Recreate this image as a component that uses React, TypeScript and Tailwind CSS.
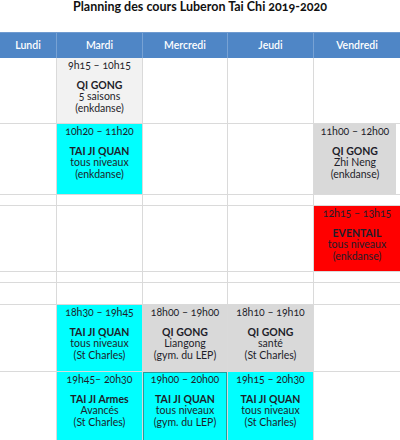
import React from 'react'

type Cell = {
    bg?: string
    time?: string
    title?: string
    lines?: string[]
    extra?: string
}

type Row = {
    h: string
    cells: Cell[]
}

const cols = 'grid grid-cols-[57px_86px_85px_86px_86px]'

const rows: Row[] = [
    {
        h: 'h-[66px]',
        cells: [
            {},
            { bg: 'bg-[#f2f2f2]', time: '9h15 – 10h15', title: 'QI GONG', lines: ['5 saisons', '(enkdanse)'] },
            {}, {}, {},
        ],
    },
    {
        h: 'h-[71px]',
        cells: [
            {},
            { bg: 'bg-[#00ffff]', time: '10h20 – 11h20', title: 'TAI JI QUAN', lines: ['tous niveaux', '(enkdanse)'] },
            {}, {},
            { bg: 'bg-[#d9d9d9]', time: '11h00 – 12h00', title: 'QI GONG', lines: ['Zhi Neng', '(enkdanse)'], extra: 'mr-[4px]' },
        ],
    },
    { h: 'h-[11px]', cells: [{}, {}, {}, {}, {}] },
    {
        h: 'h-[66px]',
        cells: [
            {}, {}, {}, {},
            { bg: 'bg-[#ff0000]', time: '12h15 – 13h15', title: 'EVENTAIL', lines: ['tous niveaux', '(enkdanse)'] },
        ],
    },
    { h: 'h-[11px]', cells: [{}, {}, {}, {}, {}] },
    { h: 'h-[22px]', cells: [{}, {}, {}, {}, {}] },
    {
        h: 'h-[67px]',
        cells: [
            {},
            { bg: 'bg-[#00ffff]', time: '18h30 – 19h45', title: 'TAI JI QUAN', lines: ['tous niveaux', '(St Charles)'] },
            { bg: 'bg-[#d9d9d9]', time: '18h00 – 19h00', title: 'QI GONG', lines: ['Liangong', '(gym. du LEP)'] },
            { bg: 'bg-[#d9d9d9]', time: '18h10 – 19h10', title: 'QI GONG', lines: ['santé', '(St Charles)'] },
            {},
        ],
    },
    {
        h: 'h-[70px]',
        cells: [
            {},
            { bg: 'bg-[#00ffff]', time: '19h45– 20h30', title: 'TAI JI Armes', lines: ['Avancés', '(St Charles)'] },
            { bg: 'bg-[#00ffff]', time: '19h00 – 20h00', title: 'TAI JI QUAN', lines: ['tous niveaux', '(gym. du LEP)'], extra: 'outline outline-1 outline-[#1f9f9f] -outline-offset-1' },
            { bg: 'bg-[#00ffff]', time: '19h15 – 20h30', title: 'TAI JI QUAN', lines: ['tous niveaux', '(St Charles)'] },
            {},
        ],
    },
]

const days = ['Lundi', 'Mardi', 'Mercredi', 'Jeudi', 'Vendredi']

function Course({ cell }: { cell: Cell }) {
    if (!cell.time) return null
    return (
        <div className={`h-full flex flex-col items-center pt-[2px] text-[10.5px] leading-[11.5px] text-[#1e1e2a] ${cell.bg} ${cell.extra ?? ''}`}>
            <span>{cell.time}</span>
            <span className="mt-[8px] font-bold">{cell.title}</span>
            {cell.lines?.map((l) => <span key={l}>{l}</span>)}
        </div>
    )
}

export default function App() {
    return (
        <div className="w-[400px] h-[440px] overflow-hidden bg-white font-['Lato','Liberation_Sans',sans-serif] [font-feature-settings:'onum']">
            <h1 className="text-center font-bold text-[12.5px] leading-[15px] text-[#111] -mt-[1px]">
                Planning des cours Luberon Tai Chi 2019-2020
            </h1>
            <div className={`${cols} mt-[18px] h-[26px] bg-[#4f86c6] border-t border-[#6f9bd0]`}>
                {days.map((d, i) => (
                    <div key={d} className={`flex items-center justify-center text-white text-[10.5px] font-semibold ${i < 4 ? 'border-r border-[#78a2d4]' : ''}`}>
                        {d}
                    </div>
                ))}
            </div>
            {rows.map((row, r) => (
                <div key={r} className={`${cols} ${row.h}`}>
                    {row.cells.map((c, i) => (
                        <div key={i} className={`border-b border-[#dadada] ${i < 4 ? 'border-r' : ''}`}>
                            <Course cell={c} />
                        </div>
                    ))}
                </div>
            ))}
        </div>
    )
}
